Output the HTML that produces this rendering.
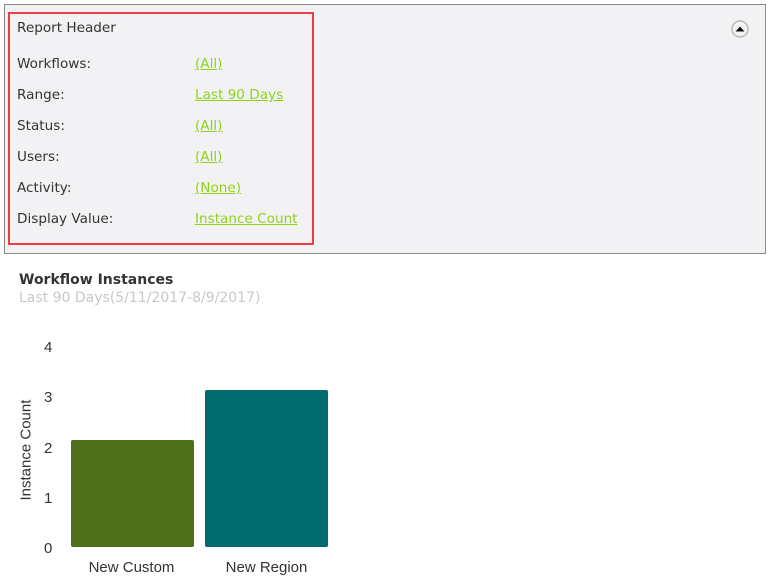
<!DOCTYPE html>
<html><head><style>
body{margin:0;width:770px;height:583px;background:#fff;position:relative;overflow:hidden;font-family:"DejaVu Sans",sans-serif;}
.a{position:absolute;white-space:nowrap}
.panel{position:absolute;left:4px;top:4px;width:760px;height:248px;border:1px solid #8a8a8a;background:#f2f2f4}
.red{position:absolute;left:8px;top:12px;width:302px;height:229px;border:2px solid #ee3e42}
.l{font-size:13.6px;color:#333}
.v{font-size:13.6px;color:#8fd21a;text-decoration:underline}
.ar{font-family:"Liberation Sans",sans-serif;font-size:15px;color:#333}
</style></head><body>
<div class="panel"></div>
<div class="red"></div>
<div class="a l" style="left:17px;top:20px">Report Header</div>
<div class="a l" style="left:17px;top:56px">Workflows:</div><div class="a v" style="left:195px;top:56px">(All)</div>
<div class="a l" style="left:17px;top:87px">Range:</div><div class="a v" style="left:195px;top:87px">Last 90 Days</div>
<div class="a l" style="left:17px;top:118px">Status:</div><div class="a v" style="left:195px;top:118px">(All)</div>
<div class="a l" style="left:17px;top:149px">Users:</div><div class="a v" style="left:195px;top:149px">(All)</div>
<div class="a l" style="left:17px;top:180px">Activity:</div><div class="a v" style="left:195px;top:180px">(None)</div>
<div class="a l" style="left:17px;top:211px">Display Value:</div><div class="a v" style="left:195px;top:211px">Instance Count</div>
<svg class="a" style="left:730px;top:19px" width="20" height="20"><circle cx="10" cy="10" r="8" fill="#f4f4f4" stroke="#b8b8b0" stroke-width="1.5"/><path d="M5.5 12.5 L10 7.5 L14.5 12.5Z" fill="#111"/></svg>
<div class="a" style="left:19px;top:272px;font-size:14px;font-weight:bold;color:#333">Workflow Instances</div>
<div class="a" style="left:19px;top:290px;font-size:14px;color:#c8c8c8">Last 90 Days(5/11/2017-8/9/2017)</div>
<div class="a ar" style="left:44px;top:339px">4</div>
<div class="a ar" style="left:44px;top:389px">3</div>
<div class="a ar" style="left:44px;top:440px">2</div>
<div class="a ar" style="left:44px;top:490px">1</div>
<div class="a ar" style="left:44px;top:540px">0</div>
<div class="a ar" style="left:-24px;top:442px;transform:rotate(-90deg);width:100px;text-align:center">Instance Count</div>
<div class="a" style="left:71px;top:440px;width:123px;height:107px;background:#4f6f1a;border-radius:2px"></div>
<div class="a" style="left:205px;top:390px;width:123px;height:157px;background:#006a6c;border-radius:2px"></div>
<div class="a ar" style="left:70px;top:559px;width:123px;text-align:center">New Custom</div>
<div class="a ar" style="left:205px;top:559px;width:123px;text-align:center">New Region</div>
</body></html>
